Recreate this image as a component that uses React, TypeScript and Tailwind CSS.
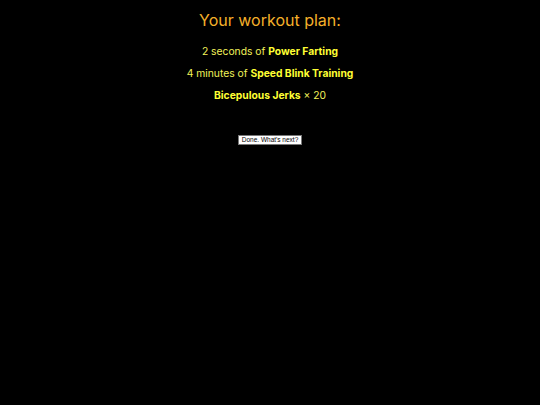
export default function App() {
  const items = [
    { pre: "2 seconds of ", name: "Power Farting", post: "" },
    { pre: "4 minutes of ", name: "Speed Blink Training", post: "" },
    { pre: "", name: "Bicepulous Jerks", post: " × 20" },
  ];
  return (
    <div className="min-h-[405px] w-full bg-black text-center" style={{ fontFamily: "Inter, 'Noto Sans', sans-serif" }}>
      <h1 className="pt-[9px] text-[16px] leading-[22px] text-[#f5b02a]">Your workout plan:</h1>
      <div className="mt-[13px] flex flex-col gap-[8px]">
        {items.map((it) => (
          <p key={it.name} className="text-[10.3px] leading-[14px] text-[#f2f25a]">
            {it.pre}
            <b className="font-bold text-[#ffff33]">{it.name}</b>
            {it.post}
          </p>
        ))}
      </div>
      <div className="mt-[22px]">
        <button className="h-[10px] border border-[#777] bg-white px-[3px] text-[6.5px] leading-[8px] text-black" style={{ fontFamily: "'Liberation Sans', sans-serif" }}>
          Done. What's next?
        </button>
      </div>
    </div>
  );
}
